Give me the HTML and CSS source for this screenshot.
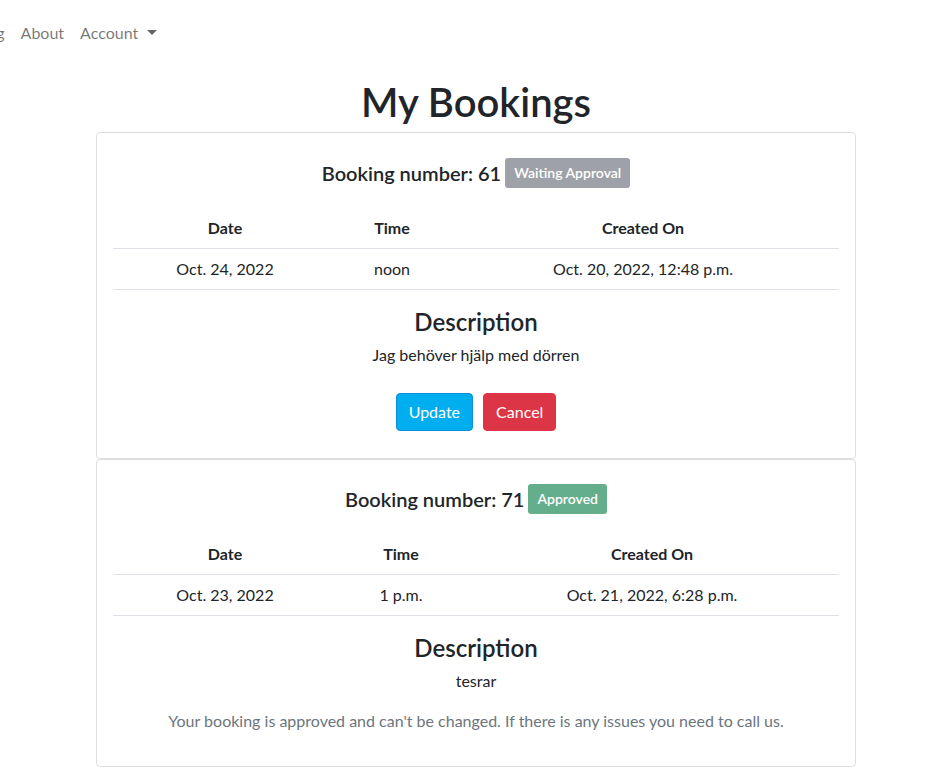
FILE: index.html
```html
<!DOCTYPE html>
<html lang="en">
<head>
<meta charset="utf-8">
<title>My Bookings</title>
<link rel="stylesheet" href="styles.css">
</head>
<body>
<nav class="navbar">
  <ul class="nav-list">
    <li><a class="nav-link" href="#">Booking</a></li>
    <li><a class="nav-link" href="#">About</a></li>
    <li><a class="nav-link dropdown" href="#">Account</a></li>
  </ul>
</nav>
<main class="page">
  <div class="container">
    <h1 class="title">My Bookings</h1>

    <section class="card">
      <h5 class="booking-head">Booking number: 61 <span class="badge badge-wait">Waiting Approval</span></h5>
      <table class="table">
        <colgroup><col class="c-a1"><col class="c-b1"><col class="c-c1"></colgroup>
        <thead><tr><th>Date</th><th>Time</th><th>Created On</th></tr></thead>
        <tbody><tr><td>Oct. 24, 2022</td><td>noon</td><td>Oct. 20, 2022, 12:48 p.m.</td></tr></tbody>
      </table>
      <h3 class="desc-title">Description</h3>
      <p class="desc">Jag behöver hjälp med dörren</p>
      <div class="actions">
        <a class="btn btn-update" href="#">Update</a>
        <a class="btn btn-cancel" href="#">Cancel</a>
      </div>
    </section>

    <section class="card card-2">
      <h5 class="booking-head">Booking number: 71 <span class="badge badge-ok">Approved</span></h5>
      <table class="table">
        <colgroup><col class="c-a2"><col class="c-b2"><col class="c-c2"></colgroup>
        <thead><tr><th>Date</th><th>Time</th><th>Created On</th></tr></thead>
        <tbody><tr><td>Oct. 23, 2022</td><td>1 p.m.</td><td>Oct. 21, 2022, 6:28 p.m.</td></tr></tbody>
      </table>
      <h3 class="desc-title">Description</h3>
      <p class="desc">tesrar</p>
      <p class="note">Your booking is approved and can't be changed. If there is any issues you need to call us.</p>
    </section>
  </div>
</main>
</body>
</html>
```
FILE: styles.css
```css
* { box-sizing: border-box; }
html, body { margin: 0; padding: 0; }
body {
  font-family: Lato, "Noto Sans", "Liberation Sans", sans-serif;
  font-size: 16px;
  line-height: 24px;
  color: #212529;
  background: #fff;
  overflow: hidden;
}
.navbar {
  padding-top: 21px;
  height: 45px;
}
.nav-list {
  list-style: none;
  margin: 0 0 0 -53px;
  padding: 0;
  display: flex;
  gap: 16px;
}
.nav-link {
  color: rgba(0,0,0,.55);
  text-decoration: none;
  font-size: 16px;
  line-height: 24px;
  display: inline-flex;
  align-items: center;
}
.dropdown::after {
  content: "";
  display: inline-block;
  margin-left: 9px;
  border-top: 5px solid rgba(0,0,0,.6);
  border-left: 5px solid transparent;
  border-right: 5px solid transparent;
  transform: translateY(-1px);
}
.page { padding-left: 6px; }
.container { width: 760px; margin: 0 auto; }
.title {
  margin: 33px 0 6px;
  text-align: center;
  font-size: 40px;
  line-height: 48px;
  font-weight: 600;
}
.card {
  border: 1px solid rgba(0,0,0,.13);
  border-radius: 4px;
  padding: 25px 16px 27px;
  text-align: center;
}
.card-2 { padding-top: 24px; padding-bottom: 33px; }
.booking-head {
  margin: 0;
  font-size: 20px;
  font-weight: 600;
  line-height: 30px;
  display: flex;
  justify-content: center;
  align-items: center;
  gap: 4px;
}
.badge {
  display: inline-block;
  font-size: 14px;
  font-weight: 600;
  line-height: 30px;
  padding: 0 9px;
  border-radius: 3px;
  color: #fff;
}
.badge-wait { background: #9ea2a8; }
.badge-ok { background: #64ae8c; }
.table {
  width: 726px;
  border-collapse: collapse;
  margin-top: 20px;
  table-layout: fixed;
}
.c-a1 { width: 224px; } .c-b1 { width: 110px; } .c-c1 { width: 392px; }
.c-a2 { width: 224px; } .c-b2 { width: 128px; } .c-c2 { width: 374px; }
.table th, .table td {
  padding: 8px;
  border-bottom: 1px solid #dee2e6;
  text-align: center;
  line-height: 24px;
  font-size: 16px;
}
.table th { font-weight: 700; }
.desc-title {
  margin: 18px 0 0;
  font-size: 24px;
  line-height: 28px;
  font-weight: 600;
}
.desc { margin: 7px 0 0; }
.actions {
  margin-top: 26px;
  display: flex;
  justify-content: center;
  gap: 10px;
}
.btn {
  display: inline-block;
  padding: 6px 12px;
  font-size: 16px;
  line-height: 24px;
  border-radius: 4px;
  color: #fff;
  text-decoration: none;
  border: 1px solid transparent;
}
.btn-update { background: #00aeef; border-color: #0a8fd8; }
.btn-cancel { background: #dc3545; border-color: #dc3545; }
.note { margin: 16px 0 0; color: #6c757d; }
```
